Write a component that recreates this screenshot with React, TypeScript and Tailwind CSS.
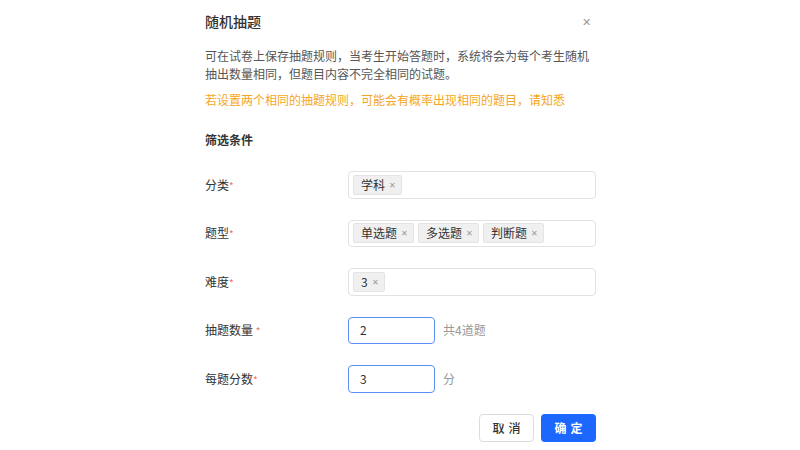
import React from "react";

const Tag = ({ label }: { label: string }) => (
  <span className="flex h-[20px] items-center gap-[4px] rounded-[2px] border border-[#e4e4e4] bg-[#f0f0f0] pl-[7px] pr-[5px] text-[12px] text-[#333]">
    {label}
    <span className="text-[8px] leading-none text-[#999]">✕</span>
  </span>
);

const Label = ({ text, spaced }: { text: string; spaced?: boolean }) => (
  <div className="w-[143px] shrink-0 text-[12px] text-[#333]">
    {text}
    {spaced ? " " : ""}
    <span className="text-[10px] text-[#f56c6c]">*</span>
  </div>
);

const App = () => {
  return (
    <div
      className="h-[450px] w-[800px] bg-white"
      style={{ fontFamily: '"Noto Sans CJK SC", "Noto Sans", sans-serif' }}
    >
      <div className="ml-[205px] w-[391px]">
        {/* header */}
        <div className="flex h-[42px] items-center justify-between">
          <h2 className="text-[14px] font-medium text-[#333]">随机抽题</h2>
          <span className="mr-[5px] text-[11px] text-[#999]">✕</span>
        </div>

        <p className="mt-[5px] text-[12px] leading-[18px] text-[#555]">
          可在试卷上保存抽题规则，当考生开始答题时，系统将会为每个考生随机抽出数量相同，但题目内容不完全相同的试题。
        </p>
        <p className="mt-[8px] text-[12px] leading-[18px] text-[#f5a623]">
          若设置两个相同的抽题规则，可能会有概率出现相同的题目，请知悉
        </p>

        <h5 className="mt-[22px] text-[12px] font-bold leading-[18px] text-[#333]">筛选条件</h5>

        <div className="mt-[22px] flex flex-col gap-[21px]">
          <div className="flex items-center">
            <Label text="分类" />
            <div className="flex h-[27.5px] flex-1 items-center gap-[4px] rounded-[4px] border border-[#e2e2e2] px-[4px]">
              <Tag label="学科" />
            </div>
          </div>

          <div className="flex items-center">
            <Label text="题型" />
            <div className="flex h-[27.5px] flex-1 items-center gap-[4px] rounded-[4px] border border-[#e2e2e2] px-[4px]">
              <Tag label="单选题" />
              <Tag label="多选题" />
              <Tag label="判断题" />
            </div>
          </div>

          <div className="flex items-center">
            <Label text="难度" />
            <div className="flex h-[27.5px] flex-1 items-center gap-[4px] rounded-[4px] border border-[#e2e2e2] px-[4px]">
              <Tag label="3" />
            </div>
          </div>

          <div className="flex items-center">
            <Label text="抽题数量" spaced />
            <div className="flex h-[27.5px] w-[87px] items-center rounded-[4px] border border-[#5b8ff2] px-[11px] text-[12px] text-[#333]">
              2
            </div>
            <span className="ml-[8px] text-[12px] text-[#999]">共4道题</span>
          </div>

          <div className="flex items-center">
            <Label text="每题分数" />
            <div className="flex h-[27.5px] w-[87px] items-center rounded-[4px] border border-[#5b8ff2] px-[11px] text-[12px] text-[#333]">
              3
            </div>
            <span className="ml-[8px] text-[12px] text-[#999]">分</span>
          </div>

          <div className="flex justify-end gap-[7px]">
            <button className="h-[28px] w-[55px] rounded-[4px] border border-[#dcdcdc] bg-white pl-[4px] text-[12px] font-medium tracking-[4px] text-[#333]">
              取消
            </button>
            <button className="h-[28px] w-[55px] rounded-[4px] bg-[#1c68ff] pl-[4px] text-[12px] font-bold tracking-[4px] text-white">
              确定
            </button>
          </div>
        </div>
      </div>
    </div>
  );
};

export default App;
